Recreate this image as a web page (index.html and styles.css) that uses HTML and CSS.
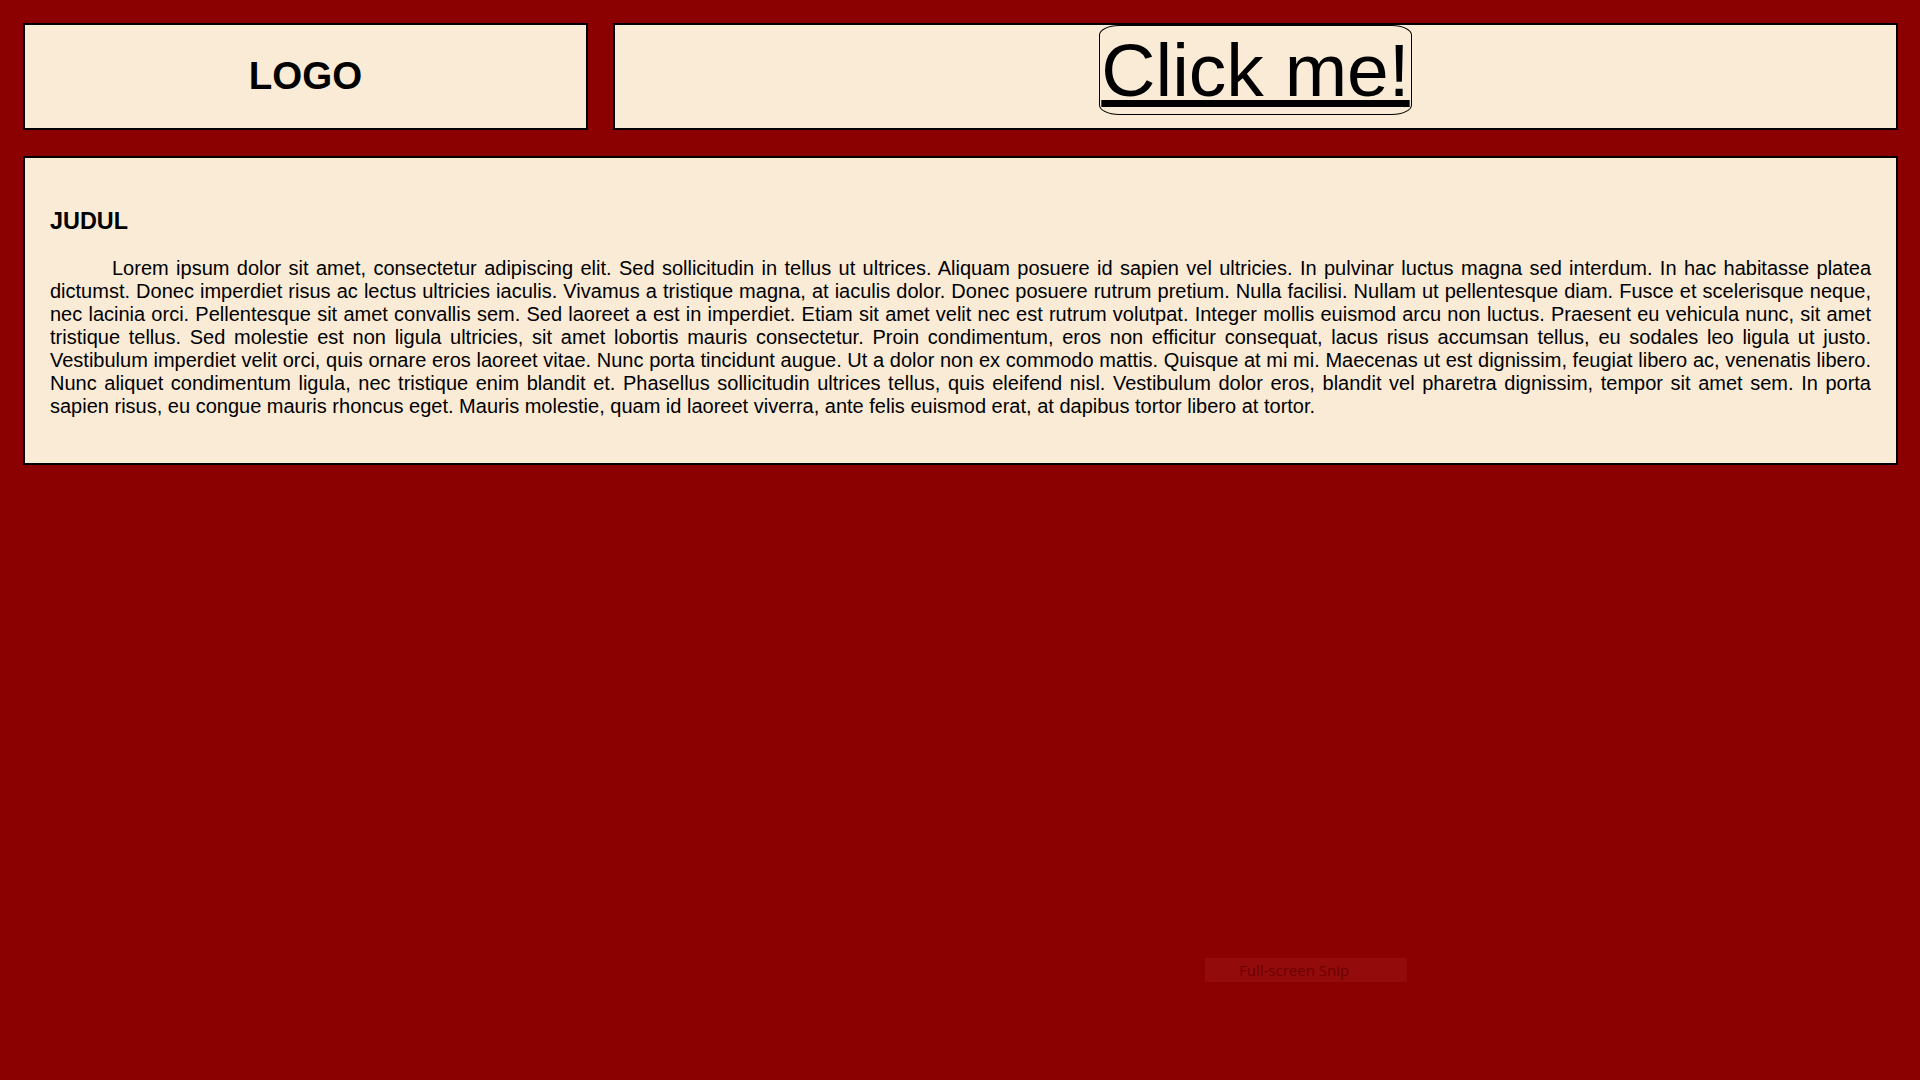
FILE: index.html
```html
<!DOCTYPE html>
<html lang="id">
<head>
<meta charset="utf-8">
<title>Halaman</title>
<link rel="stylesheet" href="styles.css">
</head>
<body>
<div class="page">
  <header class="header">
    <div class="box logo-box"><span class="logo">LOGO</span></div>
    <div class="box nav-box"><button class="btn" type="button"><span class="btn-text">Click me!</span></button></div>
  </header>
  <main class="box content">
    <h3 class="title">JUDUL</h3>
    <p class="text">Lorem ipsum dolor sit amet, consectetur adipiscing elit. Sed sollicitudin in tellus ut ultrices. Aliquam posuere id sapien vel ultricies. In pulvinar luctus magna sed interdum. In hac habitasse platea dictumst. Donec imperdiet risus ac lectus ultricies iaculis. Vivamus a tristique magna, at iaculis dolor. Donec posuere rutrum pretium. Nulla facilisi. Nullam ut pellentesque diam. Fusce et scelerisque neque, nec lacinia orci. Pellentesque sit amet convallis sem. Sed laoreet a est in imperdiet. Etiam sit amet velit nec est rutrum volutpat. Integer mollis euismod arcu non luctus. Praesent eu vehicula nunc, sit amet tristique tellus. Sed molestie est non ligula ultricies, sit amet lobortis mauris consectetur. Proin condimentum, eros non efficitur consequat, lacus risus accumsan tellus, eu sodales leo ligula ut justo. Vestibulum imperdiet velit orci, quis ornare eros laoreet vitae. Nunc porta tincidunt augue. Ut a dolor non ex commodo mattis. Quisque at mi mi. Maecenas ut est dignissim, feugiat libero ac, venenatis libero. Nunc aliquet condimentum ligula, nec tristique enim blandit et. Phasellus sollicitudin ultrices tellus, quis eleifend nisl. Vestibulum dolor eros, blandit vel pharetra dignissim, tempor sit amet sem. In porta sapien risus, eu congue mauris rhoncus eget. Mauris molestie, quam id laoreet viverra, ante felis euismod erat, at dapibus tortor libero at tortor.</p>
  </main>
</div>
<div class="snip">Full-screen Snip</div>
</body>
</html>
```

FILE: styles.css
```css
html, body {
  margin: 0;
  padding: 0;
}
body {
  background: #8b0000;
  font-family: "Liberation Sans", Arial, sans-serif;
  font-size: 20px;
  color: #000;
  min-height: 1080px;
  position: relative;
}
.page {
  padding: 23px 22px 0 23px;
}
.box {
  background: #faebd7;
  border: 2px solid #000;
  box-sizing: border-box;
}
.header {
  display: grid;
  grid-template-columns: 565px 1fr;
  column-gap: 25px;
  margin-bottom: 26px;
}
.logo-box {
  height: 107px;
  display: flex;
  align-items: center;
  justify-content: center;
}
.logo {
  font-weight: bold;
  font-size: 38.5px;
  line-height: 1;
}
.nav-box {
  height: 107px;
  display: flex;
  justify-content: center;
  align-items: flex-start;
}
.btn {
  font-family: "Liberation Sans", Arial, sans-serif;
  font-size: 75px;
  line-height: normal;
  color: #000;
  background: transparent;
  border: 1px solid #000;
  border-radius: 20px / 10px;
  padding: 1px 1px;
  margin: 0;
  cursor: pointer;
}
.btn-text {
  text-decoration: underline;
}
.content {
  padding: 25px;
}
.title {
  font-size: 1.17em;
  font-weight: bold;
  margin: 25px 0 21.8px;
}
.text {
  margin: 20px 0;
  text-align: justify;
  text-indent: 62px;
  line-height: 23px;
}
.snip {
  position: absolute;
  left: 1205px;
  top: 958px;
  width: 202px;
  height: 24px;
  box-sizing: border-box;
  padding-left: 34px;
  background: #930b0b;
  color: #6c0000;
  font-family: "Open Sans", "DejaVu Sans", sans-serif;
  font-size: 15px;
  line-height: 24px;
}
```
